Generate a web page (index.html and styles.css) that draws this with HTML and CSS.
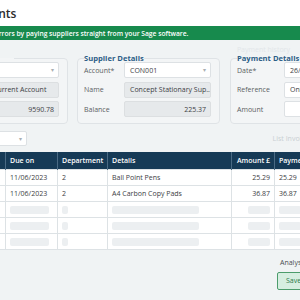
FILE: index.html
```html
<!DOCTYPE html>
<html>
<head>
<meta charset="utf-8">
<link rel="stylesheet" href="styles.css">
</head>
<body>
<div class="page">
  <div class="header"><h1 class="title">Supplier Payments</h1></div>
  <div class="banner"><span class="banner-text">Avoid errors by paying suppliers straight from your Sage software.</span></div>
  <div class="content">
    <div class="toolbar"><span class="faint">Payment history</span></div>
    <div class="groups">
      <fieldset class="group group-bank">
        <legend>Bank Details</legend>
        <div class="field-row"><label>Account*</label><div class="input select"><span></span><span class="caret">▾</span></div></div>
        <div class="field-row"><label>Name</label><div class="input disabled"><span>Current Account</span></div></div>
        <div class="field-row"><label>Balance</label><div class="input disabled right"><span>9590.78</span></div></div>
      </fieldset>
      <fieldset class="group group-supplier">
        <legend>Supplier Details</legend>
        <div class="field-row"><label>Account*</label><div class="input select"><span>CON001</span><span class="caret">▾</span></div></div>
        <div class="field-row"><label>Name</label><div class="input disabled"><span>Concept Stationary Sup...</span></div></div>
        <div class="field-row"><label>Balance</label><div class="input disabled right"><span>225.37</span></div></div>
      </fieldset>
      <fieldset class="group group-payment">
        <legend>Payment Details</legend>
        <div class="field-row"><label>Date*</label><div class="input"><span>26/06/2023</span></div></div>
        <div class="field-row"><label>Reference</label><div class="input"><span>Online</span></div></div>
        <div class="field-row"><label>Amount</label><div class="input"><span></span></div></div>
      </fieldset>
    </div>
    <div class="filter-row">
      <div class="input select small"><span></span><span class="caret">▾</span></div>
      <span class="faint-link">List Invoices</span>
    </div>
    <table class="grid">
      <colgroup>
        <col class="c0"><col class="c1"><col class="c2"><col class="c3"><col class="c4"><col class="c5">
      </colgroup>
      <thead>
        <tr><th>Type</th><th>Due on</th><th>Department</th><th>Details</th><th class="num">Amount £</th><th>Payment £</th></tr>
      </thead>
      <tbody>
        <tr><td>PI</td><td>11/06/2023</td><td>2</td><td>Ball Point Pens</td><td class="num">25.29</td><td>25.29</td></tr>
        <tr><td>PI</td><td>11/06/2023</td><td>2</td><td>A4 Carbon Copy Pads</td><td class="num">36.87</td><td>36.87</td></tr>
        <tr class="sk"><td></td><td><i class="bar b1"></i></td><td><i class="bar b2"></i></td><td><i class="bar b3"></i></td><td class="num"><i class="bar b4"></i></td><td><i class="bar b5"></i></td></tr>
        <tr class="sk"><td></td><td><i class="bar b1"></i></td><td><i class="bar b2"></i></td><td><i class="bar b3"></i></td><td class="num"><i class="bar b4"></i></td><td><i class="bar b5"></i></td></tr>
        <tr class="sk"><td></td><td><i class="bar b1"></i></td><td><i class="bar b2"></i></td><td><i class="bar b3"></i></td><td class="num"><i class="bar b4"></i></td><td><i class="bar b5"></i></td></tr>
      </tbody>
    </table>
    <div class="footer">
      <div class="analysis">Analysis</div>
      <button class="save">Save</button>
    </div>
  </div>
</div>
</body>
</html>
```
FILE: styles.css
```css
html, body {
  margin: 0;
  padding: 0;
  width: 300px;
  height: 300px;
  overflow: hidden;
  background: #f0f3f4;
  font-family: "Open Sans", "Liberation Sans", sans-serif;
}
* { box-sizing: border-box; }
.page {
  width: 300px;
  overflow: hidden;
}
.header {
  height: 26px;
  background: #ffffff;
  display: flex;
  align-items: center;
  padding-top: 1px;
}
.title {
  margin: 0;
  font-size: 12px;
  font-weight: 600;
  color: #2b2b2b;
  white-space: nowrap;
  margin-left: -92px;
}
.banner {
  height: 14px;
  background: #178a4d;
  display: flex;
  align-items: center;
  white-space: nowrap;
  overflow: hidden;
}
.banner-text {
  font-size: 6.7px;
  font-weight: 600;
  color: #ffffff;
  margin-left: -25px;
}
.content {
  background: #f0f3f4;
}
.toolbar {
  height: 14px;
  display: flex;
  justify-content: flex-end;
  align-items: flex-end;
  padding-right: 10px;
}
.faint {
  font-size: 7px;
  line-height: 8px;
  color: #e2e6e9;
}
.groups {
  display: flex;
  height: 70px;
}
.group {
  flex: none;
  margin: 0;
  padding: 0 8px 4px 6px;
  border: 1px solid #dfe3e6;
  border-radius: 4px;
  background: #f3f5f6;
  min-width: 0;
  display: flex;
  flex-direction: column;
  gap: 3.5px;
}
.group legend {
  font-size: 7.6px;
  font-weight: 700;
  color: #2c5d86;
  padding: 0;
  line-height: 8px;
}
.group-bank {
  width: 108px;
  margin-left: -40px;
  padding-left: 5px;
}
.group-bank legend, .group-bank label { visibility: hidden; }
.group-bank .field-row label { width: 21px; }
.group-supplier {
  width: 143px;
  margin-left: 9px;
}
.group-payment {
  width: 120px;
  margin-left: 10px;
}
.group-payment .field-row label { width: 47px; }
.field-row {
  display: flex;
  align-items: center;
}
.field-row label {
  font-size: 7px;
  color: #5b5f63;
  width: 40px;
  flex: none;
}
.input {
  flex: 1;
  height: 16px;
  border: 1px solid #dde1e4;
  border-radius: 2px;
  background: #ffffff;
  display: flex;
  align-items: center;
  justify-content: space-between;
  padding: 0 4px 0 5px;
  font-size: 7px;
  color: #3d4145;
  white-space: nowrap;
  overflow: hidden;
  min-width: 0;
}
.input.disabled {
  background: #e6e9eb;
  border-color: #dcdfe1;
}
.input.right {
  justify-content: flex-end;
}
.caret {
  font-size: 6px;
  color: #a9aeb2;
}
.filter-row {
  height: 28px;
  display: flex;
  align-items: center;
  justify-content: space-between;
  padding-top: 1px;
}
.input.small {
  flex: none;
  width: 35px;
  margin-left: -8px;
  height: 15px;
}
.faint-link {
  font-size: 7px;
  color: #c9cfd3;
  margin-right: -12px;
}
.grid {
  border-collapse: collapse;
  table-layout: fixed;
  width: 374px;
  margin-left: -40px;
  background: #ffffff;
  font-size: 7px;
  color: #3c4044;
}
.c0 { width: 45px; }
.c1 { width: 52px; }
.c2 { width: 50px; }
.c3 { width: 124px; }
.c4 { width: 43px; }
.c5 { width: 60px; }
.grid th {
  background: #163a56;
  color: #ffffff;
  font-weight: 600;
  text-align: left;
  height: 17px;
  padding: 0 4px;
  border-left: 1px solid #4a6a84;
  white-space: nowrap;
  overflow: hidden;
}
.grid td {
  height: 16px;
  padding: 0 4px;
  border: 1px solid #dde2e5;
  white-space: nowrap;
  overflow: hidden;
}
.grid .num { text-align: right; padding-right: 4px; }
.bar {
  display: inline-block;
  height: 8px;
  background: #eceff1;
  border-radius: 2px;
  vertical-align: middle;
}
.b1 { width: 39px; }
.b2 { width: 6px; }
.b3 { width: 87px; }
.b4 { width: 22px; }
.b5 { width: 22px; }
.footer {
  display: flex;
  flex-direction: column;
  align-items: flex-start;
  padding-left: 280px;
  padding-top: 8px;
  gap: 5px;
}
.analysis {
  font-size: 7px;
  color: #4a4e52;
  white-space: nowrap;
}
.save {
  margin-left: -3px;
  width: 40px;
  height: 18px;
  background: #d6eee1;
  border: 1px solid #4c9c6c;
  border-radius: 2px;
  font-family: inherit;
  font-size: 7px;
  color: #2a7a4a;
  text-align: left;
  padding-left: 8px;
}
```
